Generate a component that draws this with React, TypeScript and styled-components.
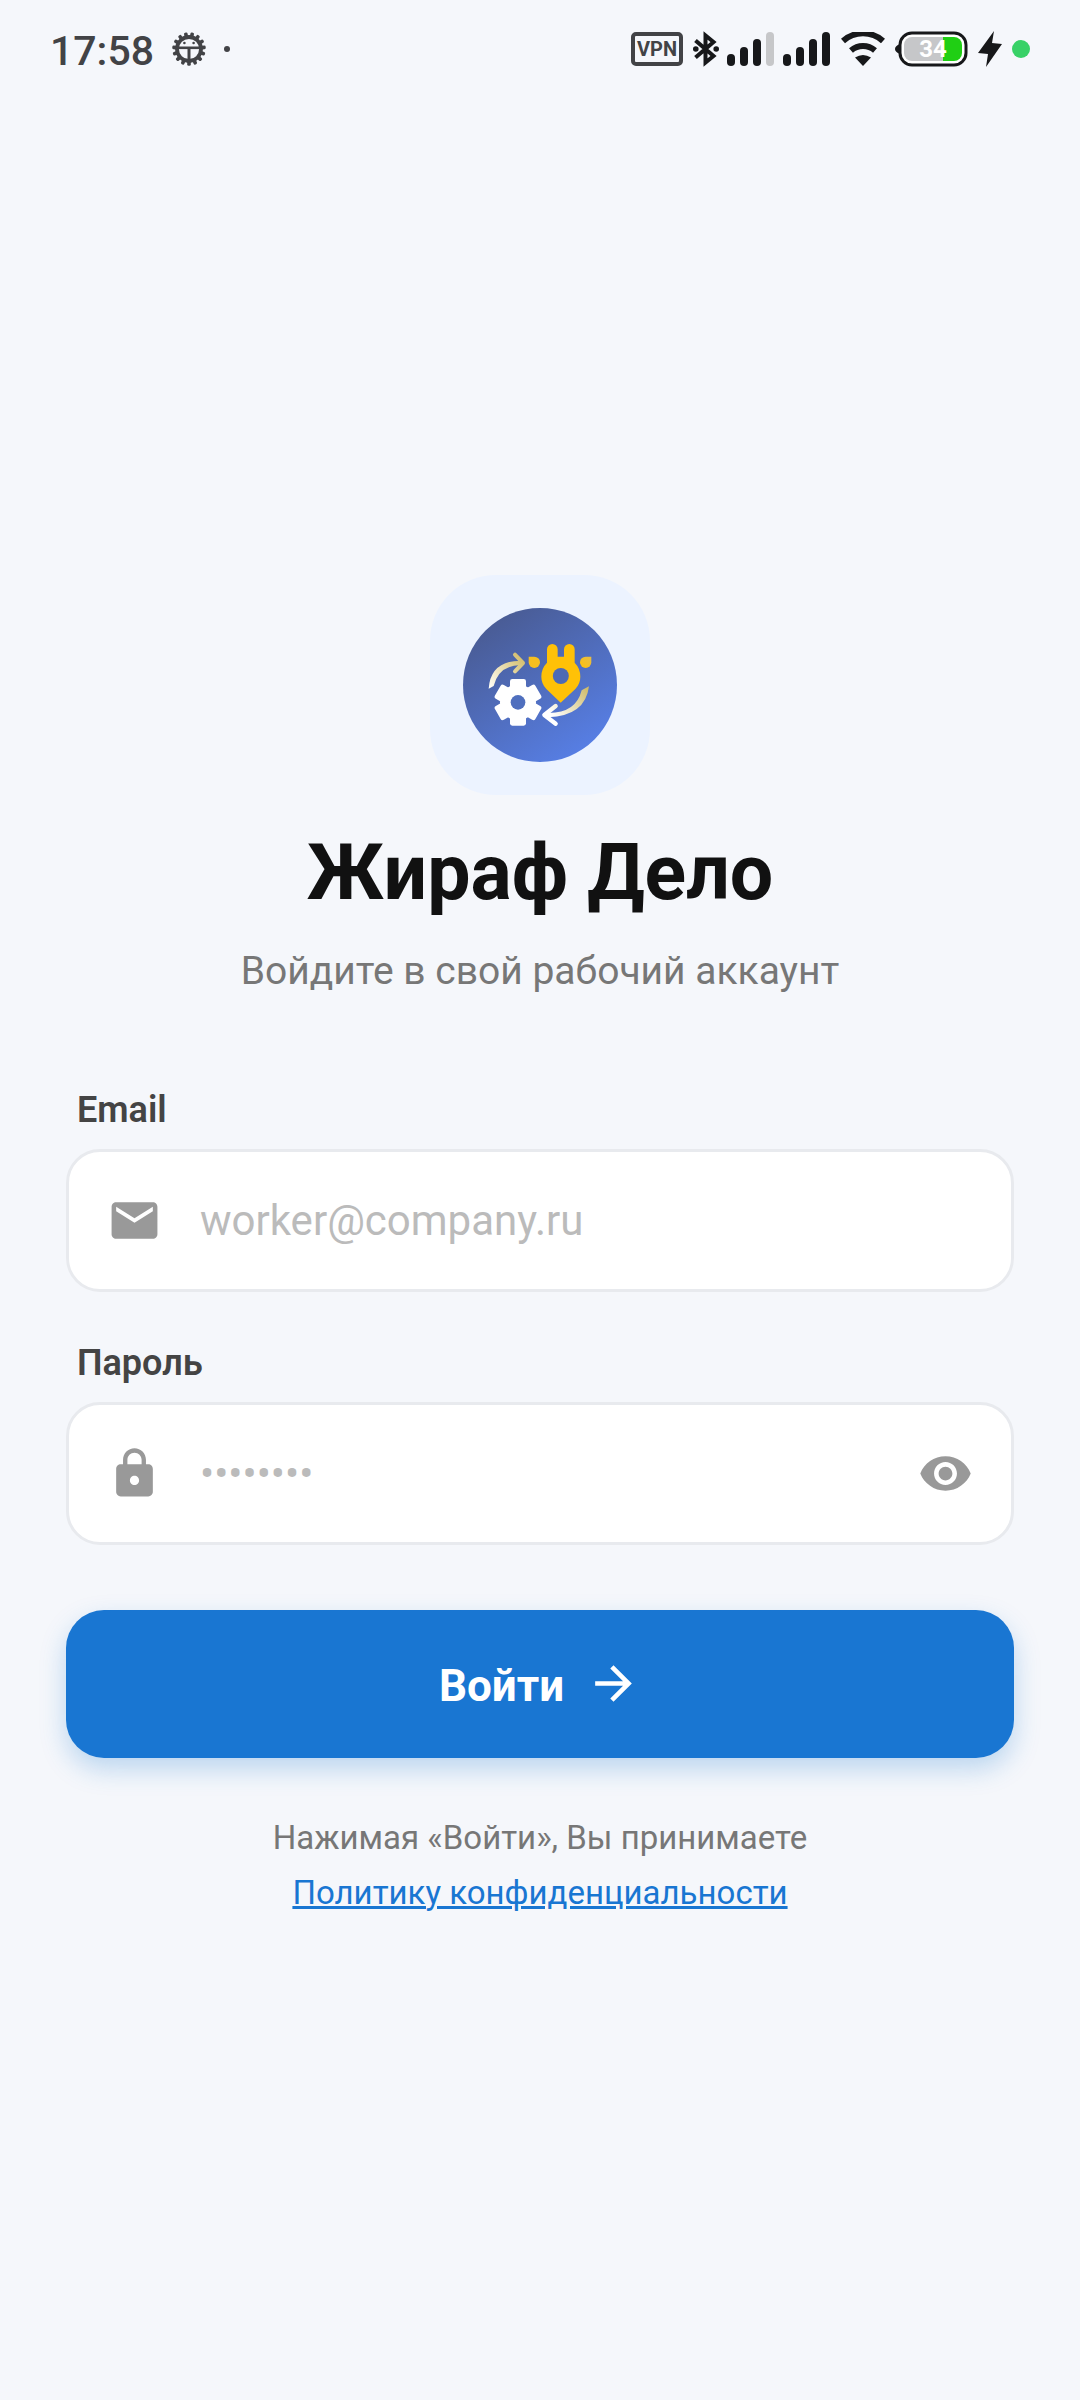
import React, { useState } from "react";
import styled, { createGlobalStyle } from "styled-components";
import { MdArrowForward, MdEmail, MdLock, MdVisibility } from "react-icons/md";

const GlobalStyle = createGlobalStyle`
  * { box-sizing: border-box; }
  body {
    margin: 0;
    background: #f5f7fb;
    font-family: Roboto, "Liberation Sans", sans-serif;
  }
`;

const Screen = styled.div`
  min-height: 100vh;
  display: flex;
  flex-direction: column;
`;

const StatusBar = styled.header`
  display: flex;
  align-items: center;
  justify-content: space-between;
  height: 94px;
  padding: 4px 50px 0;
`;

const StatusGroup = styled.div<{ $gap: number }>`
  display: flex;
  align-items: center;
  gap: ${(p) => p.$gap}px;
`;

const Clock = styled.time`
  padding-top: 3px;
  font-size: 41px;
  font-weight: 500;
  line-height: 48px;
  color: #424346;
`;

const VpnBadge = styled.span`
  width: 52px;
  height: 34px;
  border: 4px solid #424346;
  border-radius: 5px;
  font-size: 20px;
  font-weight: 700;
  line-height: 26px;
  text-align: center;
  color: #424346;
`;

const Dot = styled.span<{ $size: number; $color: string }>`
  width: ${(p) => p.$size}px;
  height: ${(p) => p.$size}px;
  border-radius: 50%;
  background: ${(p) => p.$color};
`;

const Main = styled.main`
  flex: 1;
  display: flex;
  flex-direction: column;
  justify-content: center;
  padding: 0 66px;
`;

const Brand = styled.div`
  display: flex;
  flex-direction: column;
  align-items: center;
  text-align: center;
`;

const LogoTile = styled.div`
  display: flex;
  align-items: center;
  justify-content: center;
  width: 220px;
  height: 220px;
  border-radius: 66px;
  background: #ecf3ff;
`;

const Title = styled.h1`
  margin: 33px 0 29px;
  font-size: 77px;
  font-weight: 700;
  line-height: 90px;
  color: #111111;
`;

const Subtitle = styled.p`
  margin: 0;
  font-size: 39px;
  line-height: 48px;
  color: #777777;
`;

const Form = styled.form`
  display: flex;
  flex-direction: column;
  gap: 50px;
  margin-top: 94px;
`;

const Field = styled.div`
  display: flex;
  flex-direction: column;
  gap: 18px;
`;

const Label = styled.label`
  padding-left: 11px;
  font-size: 36px;
  font-weight: 600;
  line-height: 42px;
  color: #444444;
`;

const InputBox = styled.div`
  display: flex;
  align-items: center;
  gap: 38px;
  height: 143px;
  padding: 0 38px;
  border: 3px solid #e8eaee;
  border-radius: 34px;
  background: #ffffff;
  color: #999999;

  svg { flex: none; display: block; }
`;

const TextInput = styled.input`
  flex: 1;
  min-width: 0;
  height: 100%;
  padding: 0;
  border: 0;
  outline: 0;
  background: transparent;
  font-family: inherit;
  font-size: 42px;
  color: #222222;

  &::placeholder { color: #bbbbbb; opacity: 1; }
`;

const RevealButton = styled.button`
  padding: 0;
  border: 0;
  background: none;
  color: inherit;
  cursor: pointer;
`;

const SubmitButton = styled.button`
  display: flex;
  align-items: center;
  justify-content: center;
  gap: 22px;
  height: 148px;
  margin-top: 15px;
  border: 0;
  border-radius: 38px;
  background: #1976d2;
  box-shadow: 0 11px 26px rgba(25, 118, 210, 0.26);
  font-family: inherit;
  font-size: 44px;
  font-weight: 700;
  color: #ffffff;
  cursor: pointer;
`;

const SubmitText = styled.span`
  padding-top: 4px;
`;

const Legal = styled.p`
  margin: 52px 0 0;
  font-size: 33px;
  line-height: 55px;
  text-align: center;
  color: #777777;
`;

const PolicyLink = styled.a`
  display: block;
  color: #1976d2;
  text-decoration: underline;
`;

const ICON = 55;

function GearFaceIcon() {
  const teeth = Array.from({ length: 15 }, (_, i) => i * 24 + 12);
  return (
    <svg width="34" height="34" viewBox="-17 -17 34 34" aria-hidden="true">
      {teeth.map((a) => (
        <rect key={a} x="-1.8" y="-16.8" width="3.6" height="5" rx="1.4" fill="#424346" transform={`rotate(${a})`} />
      ))}
      <circle r="12" fill="none" stroke="#424346" strokeWidth="3.8" />
      <path d="M-11-1.200H11" stroke="#424346" strokeWidth="2.600" />
      <path d="M0 0V12" stroke="#424346" strokeWidth="3" />
      <circle cx="-4.6" cy="-6" r="1.3" fill="#424346" />
      <circle cx="4.6" cy="-6" r="1.3" fill="#424346" />
    </svg>
  );
}

function BluetoothIcon() {
  return (
    <svg width="26" height="36" viewBox="0 0 26 36" aria-hidden="true">
      <path d="M2.5 9.500L20.500 25L12.500 31.500V4.500L20.500 11L2.500 26.500" fill="none" stroke="#17181a" strokeWidth="4" />
      <circle cx="2.800" cy="18" r="2.800" fill="#17181a" />
      <circle cx="23.200" cy="18" r="2.800" fill="#17181a" />
    </svg>
  );
}

function SignalIcon({ level }: { level: number }) {
  const heights = [12, 19, 27, 34];
  return (
    <svg width="48" height="34" viewBox="0 0 48 34" aria-hidden="true">
      {heights.map((h, i) => (
        <rect key={h} x={i * 13} y={34 - h} width="8" height={h} rx="4" fill={i < level ? "#17181a" : "#c6c7c9"} />
      ))}
    </svg>
  );
}

function WifiIcon() {
  return (
    <svg width="44" height="34" viewBox="0 0 44 34" aria-hidden="true">
      <path d="M2 9A30 30 0 0 1 42 9" fill="none" stroke="#17181a" strokeWidth="6" />
      <path d="M10 18.500A18.500 18.500 0 0 1 34 18.500" fill="none" stroke="#17181a" strokeWidth="6" />
      <path d="M14 25.500Q22 20.500 30 25.500L22 34Z" fill="#17181a" />
    </svg>
  );
}

function BatteryIcon() {
  return (
    <svg width="73" height="36" viewBox="0 0 73 36" role="img" aria-label="34%">
      <path d="M5 13Q0 15 0 18T5 23Z" fill="#17181a" />
      <rect x="5" y="2" width="66" height="32" rx="12" fill="#ffffff" stroke="#17181a" strokeWidth="3" />
      <path d="M17 6H48V30H17A8 8 0 0 1 9 22V14A8 8 0 0 1 17 6Z" fill="#c6c7c9" />
      <path d="M48 6H59A8 8 0 0 1 67 14V22A8 8 0 0 1 59 30H48Z" fill="#20cf14" />
      <text x="38" y="26" textAnchor="middle" fontFamily="Roboto, sans-serif" fontSize="24" fontWeight="700" fill="#ffffff">34</text>
    </svg>
  );
}

function BoltIcon() {
  return (
    <svg width="24" height="36" viewBox="0 0 24 36" aria-hidden="true">
      <path d="M16 0L0 22L10 23L8 36L24 13L14 12Z" fill="#17181a" />
    </svg>
  );
}

function Logo() {
  return (
    <svg width="154" height="154" viewBox="129 144 462 462" role="img" aria-label="Жираф Дело">
      <defs>
        <linearGradient id="disc" gradientUnits="userSpaceOnUse" x1="220" y1="170" x2="500" y2="580">
          <stop offset="0" stopColor="#495b93" />
          <stop offset="1" stopColor="#577fe6" />
        </linearGradient>
        <linearGradient id="upArrow" gradientUnits="userSpaceOnUse" x1="212" y1="385" x2="315" y2="300">
          <stop offset="0" stopColor="#fffdf5" />
          <stop offset="1" stopColor="#d3bd6c" />
        </linearGradient>
        <linearGradient id="downArrow" gradientUnits="userSpaceOnUse" x1="400" y1="470" x2="508" y2="380">
          <stop offset="0" stopColor="#ffffff" />
          <stop offset="1" stopColor="#cdb862" />
        </linearGradient>
        <linearGradient id="leaf" x1="0" y1="1" x2="1" y2="0">
          <stop offset="0" stopColor="#ffc107" />
          <stop offset="1" stopColor="#e6bd48" />
        </linearGradient>
      </defs>
      <circle cx="360" cy="375" r="231" fill="url(#disc)" />

      <path d="M206 386Q212 303 302 302V315Q236 316 221 378Z" fill="url(#upArrow)" />
      <path d="M285 284L309 309L285 334" fill="none" stroke="url(#upArrow)" strokeWidth="12" strokeLinecap="round" strokeLinejoin="round" />
      <path d="M507 379Q496 468 384 472V459Q468 460 485 391Z" fill="url(#downArrow)" />
      <path d="M407 438L373 465L407 491" fill="none" stroke="url(#downArrow)" strokeWidth="13" strokeLinecap="round" strokeLinejoin="round" />

      <g transform="translate(294 427)" fill="#ffffff">
        {[0, 60, 120].map((a) => (
          <rect key={a} x="-24" y="-70" width="48" height="140" rx="7" transform={`rotate(${a})`} />
        ))}
        <circle r="54" />
      </g>
      <circle cx="294" cy="427" r="22" fill="#4f6fbe" />

      <path
        d="M381 268A16 16 0 0 1 413 268V290H432V268A16 16 0 0 1 464 268V308Q481 325 481 350Q481 371 466 387L422 428L379 387Q364 371 364 350Q364 325 381 308Z"
        fill="#ffc107"
      />
      <circle cx="422.500" cy="348" r="24" fill="#4d6ab5" />
      <path d="M326 290H343A17 17 0 1 1 326 307Z" fill="#f6bf20" />
      <path d="M514 290H497A17 17 0 1 0 514 307Z" fill="url(#leaf)" />
    </svg>
  );
}

export default function App() {
  const [visible, setVisible] = useState(false);

  return (
    <Screen>
      <GlobalStyle />
      <StatusBar>
        <StatusGroup $gap={18}>
          <Clock>17:58</Clock>
          <GearFaceIcon />
          <Dot $size={6} $color="#424346" />
        </StatusGroup>
        <StatusGroup $gap={10}>
          <VpnBadge>VPN</VpnBadge>
          <StatusGroup $gap={8}>
            <BluetoothIcon />
            <SignalIcon level={3} />
            <SignalIcon level={4} />
          </StatusGroup>
          <WifiIcon />
          <BatteryIcon />
          <BoltIcon />
          <Dot $size={18} $color="#38d167" />
        </StatusGroup>
      </StatusBar>

      <Main>
        <Brand>
          <LogoTile>
            <Logo />
          </LogoTile>
          <Title>Жираф Дело</Title>
          <Subtitle>Войдите в свой рабочий аккаунт</Subtitle>
        </Brand>

        <Form onSubmit={(e) => e.preventDefault()}>
          <Field>
            <Label htmlFor="email">Email</Label>
            <InputBox>
              <MdEmail size={ICON} />
              <TextInput id="email" type="email" placeholder="worker@company.ru" />
            </InputBox>
          </Field>
          <Field>
            <Label htmlFor="password">Пароль</Label>
            <InputBox>
              <MdLock size={ICON} />
              <TextInput id="password" type={visible ? "text" : "password"} placeholder="••••••••" />
              <RevealButton type="button" aria-label="Показать пароль" onClick={() => setVisible(!visible)}>
                <MdVisibility size={ICON} />
              </RevealButton>
            </InputBox>
          </Field>
          <SubmitButton type="submit">
            <SubmitText>Войти</SubmitText>
            <MdArrowForward size={ICON} />
          </SubmitButton>
        </Form>

        <Legal>
          Нажимая «Войти», Вы принимаете
          <PolicyLink href="#privacy">Политику конфиденциальности</PolicyLink>
        </Legal>
      </Main>
    </Screen>
  );
}
